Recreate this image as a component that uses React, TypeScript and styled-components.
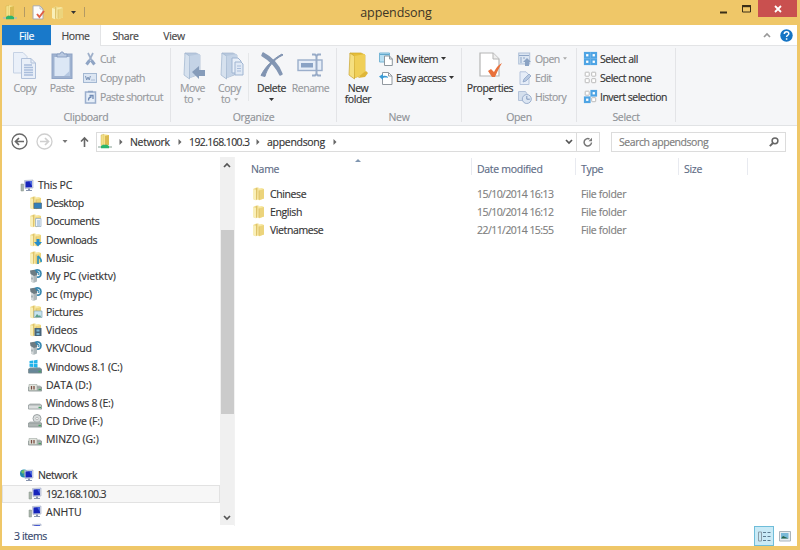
import React from "react";
import styled, { createGlobalStyle, css } from "styled-components";

const Global = createGlobalStyle`
  * { box-sizing: border-box; }
  html, body { margin: 0; padding: 0; overflow: hidden; }
  body {
    font-family: "Open Sans", "Noto Sans", sans-serif; font-size: 10.5px; color: #333;
    letter-spacing: -0.2px; -webkit-text-stroke: 0.15px currentColor;
  }
  svg { display: block; flex: none; overflow: visible; }
`;

/* ---------- window frame ---------- */
const Window = styled.div`
  width: 800px; height: 550px; background: #efc768;
  display: grid; grid-template-rows: 25px 21px 80px 31px 369px 20px;
  padding: 0 3px 4px 2px;
`;
const TitleBar = styled.header`
  display: grid; grid-template-columns: 250px 1fr 250px; align-items: center;
`;
const QuickAccess = styled.div`
  display: flex; align-items: center; gap: 6px; padding-left: 1px; height: 25px;
`;
const QuickDivider = styled.i`width: 1px; height: 10px; background: #b39a64; margin: 0 1px 2px;`;
const Title = styled.h1`
  margin: 0; font-size: 12.5px; font-weight: 400; text-align: center; color: #3d3526; letter-spacing: -0.1px;
  padding-right: 7px; -webkit-text-stroke: 0;
`;
const WindowButtons = styled.div`
  display: flex; justify-content: flex-end; align-self: start; height: 17px;
`;
const WinButton = styled.button<{ $close?: boolean }>`
  border: 0; padding: 0; height: 17px; width: ${(p) => (p.$close ? 39 : 23)}px;
  display: flex; align-items: center; justify-content: center;
  background: ${(p) => (p.$close ? "#c9504f" : "transparent")};
`;

/* ---------- ribbon ---------- */
const Tabs = styled.nav`
  display: flex; background: #fff; border-bottom: 1px solid #e3e4e6; height: 21px;
`;
const Tab = styled.div<{ $kind?: "file" | "active"; $w: number }>`
  width: ${(p) => p.$w}px; height: 21px; line-height: 22px; text-align: center; color: #444; letter-spacing: -0.4px;
  ${(p) => p.$kind === "file" && css`background: #1979ca; color: #fff; height: 20px;`}
  ${(p) => p.$kind === "active" && css`background: #f5f6f8; border-right: 1px solid #e3e4e6;`}
`;
const TabTools = styled.div`
  margin-left: auto; display: flex; align-items: center; gap: 9px; padding-right: 4px; height: 20px;
`;
const Ribbon = styled.section`
  display: flex; background: #f5f6f8; border-bottom: 1px solid #e1e3e5; padding-top: 2px; height: 80px;
`;
const Group = styled.div<{ $w: number }>`
  width: ${(p) => p.$w}px; height: 74px; border-right: 1px solid #e3e4e7;
  display: grid; grid-template-rows: 62px 12px;
`;
const GroupBody = styled.div<{ $pad: number }>`display: flex; padding-left: ${(p) => p.$pad}px;`;
const GroupName = styled.div`
  text-align: center; color: #8f9297; line-height: 14px; letter-spacing: -0.3px;
`;
const LargeButton = styled.div<{ $w: number; $on?: boolean }>`
  width: ${(p) => p.$w}px; display: flex; flex-direction: column; align-items: center;
  color: ${(p) => (p.$on ? "#333" : "#97999d")}; line-height: 11px; text-align: center; padding-top: 3px;
  white-space: nowrap; letter-spacing: -0.45px;
`;
const LargeIcon = styled.span`height: 32px; display: flex; align-items: flex-start;`;
const LabelLine = styled.span`display: flex; align-items: center; gap: 4px; height: 11px;`;
const InnerDivider = styled.i`width: 1px; height: 48px; margin: 5px 3px 0 0; background: #e5e7e9;`;
const SmallColumn = styled.div<{ $gap?: number }>`
  display: flex; flex-direction: column; padding-top: 1px; margin-left: ${(p) => p.$gap ?? 0}px;
`;
const SmallButton = styled.div<{ $on?: boolean }>`
  height: 19px; display: flex; align-items: center; gap: 3px; white-space: nowrap;
  color: ${(p) => (p.$on ? "#333" : "#97999d")};
  letter-spacing: ${(p) => (p.$on ? -0.6 : -0.55)}px;
`;
const SelectButton = styled(SmallButton)`letter-spacing: -0.5px;`;

/* ---------- address row ---------- */
const AddressRow = styled.div`
  display: flex; align-items: center; background: #fff; padding: 0 11px 0 9px; height: 31px;
`;
const NavButtons = styled.div`display: flex; align-items: center; width: 85px;`;
const AddressBox = styled.div`
  width: 504px; height: 20px; border: 1px solid #dcdcdc; display: flex; align-items: center; padding-left: 1px;
`;
const Crumb = styled.span<{ $w: number; $ls?: number }>`
  width: ${(p) => p.$w}px; color: #333; white-space: nowrap; letter-spacing: ${(p) => p.$ls ?? -0.3}px;
`;
const CrumbArrow = styled.span`width: 18px; display: flex; justify-content: center;`;
const AddressEnd = styled.div`
  margin-left: auto; display: grid; grid-template-columns: 14px 23px; align-items: center; justify-items: center; height: 18px;
`;
const Refresh = styled.span`
  border-left: 1px solid #dcdcdc; width: 23px; height: 18px; display: flex; align-items: center; justify-content: center;
`;
const SearchBox = styled.div`
  margin-left: 11px; width: 175px; height: 20px; border: 1px solid #dcdcdc; padding: 0 6px 0 7px; color: #7c7c7c;
  display: flex; align-items: center; justify-content: space-between; letter-spacing: -0.45px;
`;

/* ---------- body ---------- */
const Body = styled.main`
  display: grid; grid-template-columns: 218px 14px 1fr; background: #fff; min-height: 0;
`;
const Tree = styled.aside`overflow: hidden; padding-top: 19px; height: 369px;`;
const TreeRow = styled.div<{ $depth: number; $selected?: boolean }>`
  height: 18.17px; display: flex; align-items: center; gap: 4px; color: #333;
  padding-left: ${(p) => (p.$depth ? 26 : 18)}px;
  white-space: nowrap;
  ${(p) => p.$selected && css`background: #f7f7f7; box-shadow: inset 0 0 0 1px #e2e2e2;`}
`;
const TreeText = styled.span<{ $ls: number }>`letter-spacing: ${(p) => p.$ls}px;`;
const TreeGap = styled.div`height: 18px;`;
const ScrollTrack = styled.div`
  background: #f0f0f0; display: flex; flex-direction: column; align-items: center; height: 368px;
`;
const ScrollThumb = styled.div`width: 13px; height: 184px; background: #cbcbcb; margin-top: 57px;`;
const ScrollEnd = styled.span<{ $bottom?: boolean }>`
  height: 16px; display: flex; align-items: center; ${(p) => p.$bottom && "margin-top: auto;"}
`;
const Files = styled.section`border-left: 1px solid #f2f2f2;`;
const columns = "237px 104px 103px 69px";
const HeaderRow = styled.div`
  display: grid; grid-template-columns: ${columns}; height: 28px; align-items: start;
`;
const HeaderCell = styled.div<{ $first?: boolean }>`
  height: 17px; margin-top: 1px; border-right: 1px solid #e8eaf0; color: #5d6b85; line-height: 22px;
  padding-left: ${(p) => (p.$first ? 16 : 5)}px; white-space: nowrap; letter-spacing: -0.3px;
  display: flex;
`;
const SortMark = styled.span`margin: 1px 0 0 76px;`;
const FileRow = styled.div`
  display: grid; grid-template-columns: ${columns}; height: 18.1px; align-items: center; color: #808080;
  white-space: nowrap;
`;
const FileName = styled.div`
  display: flex; align-items: center; gap: 5px; padding-left: 17px; color: #333; letter-spacing: -0.4px;
`;
const FileCell = styled.div<{ $ls?: number }>`padding-left: 5px; letter-spacing: ${(p) => p.$ls ?? -0.3}px;`;
const StatusBar = styled.footer`
  display: flex; align-items: center; background: #fff; color: #34466b; padding: 0 6px 0 12px; letter-spacing: -0.4px;
`;
const ViewModes = styled.div`margin-left: auto; display: flex; align-items: center; gap: 5px;`;
const ActiveView = styled.span`
  width: 20px; height: 20px; background: #c9eaf6; border: 1px solid #6fbdd9; display: flex; align-items: center; justify-content: center;
`;

/* ---------- icons ---------- */
const Svg = ({ w, h, vb, children }: { w: number; h: number; vb?: string; children: React.ReactNode }) => (
  <svg width={w} height={h} viewBox={vb ?? `0 0 ${w} ${h}`} fill="none">{children}</svg>
);
const Caret = ({ c = "#333", s = 5 }: { c?: string; s?: number }) => (
  <Svg w={s} h={3} vb="0 0 5 3"><path d="M0 0h5L2.5 3z" fill={c} /></Svg>
);
const Folder = ({ children }: { children?: React.ReactNode }) => (
  <Svg w={13} h={14}>
    <path d="M1 2 4.500.5h2V12L4 13.200 1 12z" fill="#eed987" />
    <path d="M1 2 4 3v10.200L1 12z" fill="#f9efb8" />
    <path d="M6 1.500 10 1l2 1v9.500L7 13.300 5 12z" fill="#f7e7a0" />
    <path d="M7 3.500 12 2v9.500l-5 1.800z" fill="#ecd47c" />
    <path d="M4.500 1v11.500M7 3.500v9" stroke="#d3b45a" strokeWidth=".6" />
    {children}
  </Svg>
);
const NetFolder = () => (
  <Svg w={14} h={15}>
    <path d="M3 1 6 .3V10.500L3 11.500z" fill="#f3e08a" stroke="#c9ab45" strokeWidth=".4" /><path d="M6 .3 11 1v10H6z" fill="#f6e28b" />
    <path d="m7 2 4-1v10l-4 1z" fill="#dbbb52" />
    <path d="M0 13h14" stroke="#aebfb7" strokeWidth="1.500" /><path d="M3 14.200V12l2-1.200h4l2 1.200v2.200z" fill="#2bb56c" />
  </Svg>
);
const Doc = () => (
  <Svg w={13} h={15}>
    <path d="M1 .8h7L11 4v10H1z" fill="#fdfdfd" stroke="#aaa" /><path d="M8 1v3h3" stroke="#aaa" strokeWidth=".7" />
    <path d="m5 9 2.400 3L12 6" stroke="#df6046" strokeWidth="2" />
  </Svg>
);
const CopyBig = () => (
  <Svg w={26} h={29}>
    <path d="M1.500 1.500H11l4 4V22H1.500z" fill="#eaf0f9" stroke="#c6d2e4" />
    <path d="M9.500 7.500H19l4.500 4.500V27.500h-14z" fill="#e9eff8" stroke="#b1c1da" /><path d="M19 7.500V12h4.500" stroke="#b1c1da" />
    <path d="M12 14h8M12 16.500h9M12 19h9M12 21.500h9M12 24h9" stroke="#a9bddb" strokeWidth="1.300" />
  </Svg>
);
const PasteBig = () => (
  <Svg w={24} h={29}>
    <rect x="2" y="3" width="20" height="24.500" fill="#9fb2d0" stroke="#8fa4c6" /><rect x="4.500" y="6" width="15" height="19" fill="#dce7f5" />
    <path d="M7 6V3h3l1-2h2l1 2h3v3z" fill="#b9c9e1" stroke="#8197bb" strokeWidth=".8" />
    <path d="m14 25 5.500-5v5z" fill="#b5c8e2" />
  </Svg>
);
const FolderBig = ({ kind }: { kind: "move" | "copy" | "new" }) => {
  const y = kind === "new";
  return (
    <Svg w={26} h={29}>
      <path d="M5 2h11l4 2v19L9 27z" fill={y ? "#e5be38" : "#b7c8dd"} stroke={y ? "#d0a92d" : "#a4b6ce"} strokeWidth=".7" />
      <path d="M5 2 9.500 5v23L4 24z" fill={y ? "#f5df80" : "#d6e1ee"} stroke={y ? "#c9a431" : "#9eb3cd"} strokeWidth=".7" />
      <path d="M9.500 5 20 3v19l-10 5z" fill={y ? "#f0cf57" : "#c4d3e6"} />
      {y && <path d="m18 22 3-2 2 2-3 4-7 1z" fill="#dfb638" />}
      {kind === "move" && <path d="m12 21 7-6v4h6v6h-6v3z" fill="#869cba" />}
      {kind === "copy" && <><path d="M15 7h6l3 3v12h-9z" fill="#e8eff8" stroke="#9fb4d1" /><path d="M18 11h6l2 2v11h-8z" fill="#e0e9f5" stroke="#9fb4d1" /><path d="M20 15h4M20 17.500h4M20 20h4" stroke="#a9bddb" /></>}
    </Svg>
  );
};
const DeleteBig = () => (
  <Svg w={26} h={29}>
    <path d="M3 4.500C9 8 17 15 21 24l2-1C20 14 12 6 4 2z" fill="#8497b4" stroke="#8497b4" strokeWidth="1.500" strokeLinejoin="round" />
    <path d="M23 3C14 8 6 16 2 24.500l4 1C8 17 15 8 24 4z" fill="#8093b1" stroke="#8093b1" strokeLinejoin="round" />
  </Svg>
);
const RenameBig = () => (
  <Svg w={27} h={29}>
    <rect x="1" y="9" width="24" height="10.500" fill="#e6eef8" stroke="#9baecb" strokeWidth="1.400" />
    <rect x="4" y="12" width="12" height="4.500" fill="#8aa3c5" />
    <path d="M15 3.500h3l1.500 1.500L21 3.500h3M19.500 5v18M15 24.500h3l1.500-1.500 1.500 1.500h3" stroke="#98abc7" strokeWidth="2" />
  </Svg>
);
const PropertiesBig = () => (
  <Svg w={26} h={29}>
    <path d="M3 2h13l6 6v17H3z" fill="#fff" stroke="#b5b5b5" strokeWidth="1.200" /><path d="M16 2v6h6" fill="#eee" stroke="#b5b5b5" />
    <path d="m11 20 3-2 3 3c2-4 4-7 8-9-3 5-5 9-7 14h-3z" fill="#e8703b" />
  </Svg>
);
const Scissors = () => (
  <Svg w={13} h={14}><path d="M4 1 8 9M9 1 5 9" stroke="#9fb0ca" strokeWidth="1.700" /><path d="M2.500 12.500 5.500 8.500M10.500 12.500 7.500 8.500" stroke="#8fa4c4" strokeWidth="3" /></Svg>
);
const PathIcon = () => (
  <Svg w={14} h={12}><rect x=".5" y="1.500" width="13" height="9" fill="#dce6f3" stroke="#a4b8d2" /><path d="m2.500 4 1.200 4L5 5l1.200 3 1.200-4M8.500 8h1M10.500 8h1" stroke="#7d95b8" /></Svg>
);
const ShortcutIcon = () => (
  <Svg w={13} h={14}><rect x="1.500" y="2" width="10" height="11" fill="#e6eef8" stroke="#9bafcd" strokeWidth="1.500" /><path d="M4.500 10.500c0-2 1-3.500 3-3.500M5.500 5.500H9V9" stroke="#6f8ab4" strokeWidth="1.300" /><path d="M4 1.500h5" stroke="#8fa4c4" strokeWidth="1.500" /></Svg>
);
const NewItem = () => (
  <Svg w={14} h={14}><path d="M.5 1h10v9H.5z" fill="#b9dff2" stroke="#76b5d5" /><path d="M1 2.500h9" stroke="#62a8cc" /><path d="M5.500 4h5L13.300 7v6.500H5.500z" fill="#fff" stroke="#8d969d" /><path d="M10.500 4v3h3" stroke="#8d969d" /></Svg>
);
const EasyAccess = () => (
  <Svg w={14} h={14}><path d="M3.500 1.500h6L13 5v8.500H3.500z" fill="#fff" stroke="#9299a0" /><path d="M9.500 1.500V5H13" stroke="#9299a0" /><path d="M0 5.500 4 3v2c3-.5 5 0 5 2-2-.6-3-.5-5 0V9z" fill="#3b9bd5" /></Svg>
);
const OpenIcon = () => (
  <Svg w={14} h={14}><rect x=".7" y="1" width="11" height="11" fill="#dce6f2" stroke="#afc0d8" /><path d="M1 3.500h10M3 5v6M5 6h2" stroke="#8fa6c7" /><path d="m9 6 4 4h-2v4H7v-4H5z" fill="#8aa2c3" /></Svg>
);
const EditIcon = () => (
  <Svg w={14} h={14}><path d="M2 .8h6L11 4v9.500H2z" fill="#e6edf8" stroke="#b5c4dc" /><path d="m5 11 1-3 5-5 2 2-5 5z" fill="#b8c9e2" stroke="#8fa5c7" strokeWidth=".8" /></Svg>
);
const HistoryIcon = () => (
  <Svg w={14} h={14}><path d="M.5 1.500h7l2 3v6h-9z" fill="#d4dfed" stroke="#b3c2d9" /><circle cx="8.800" cy="9" r="4.500" fill="#dce6f3" stroke="#9bafcd" /><path d="M8.800 6v3.200h3" stroke="#8097bb" /></Svg>
);
const SelectIcon = ({ on }: { on: number[] }) => (
  <Svg w={13} h={13}>
    {[0, 1, 2, 3].map((i) => {
      const x = (i % 2) * 6.5, y = Math.floor(i / 2) * 6.5;
      return on.includes(i)
        ? <rect key={i} x={x + 1} y={y + 1} width="4.500" height="4.500" fill="#fff" stroke="#4ea4e4" strokeWidth="2.200" />
        : <rect key={i} x={x + 1.2} y={y + 1.2} width="4" height="4" rx=".5" fill="#fff" stroke="#bababa" />;
    })}
  </Svg>
);
const Pc = ({ globe }: { globe?: boolean }) => (
  <Svg w={14} h={13}>
    {globe ? <><circle cx="4" cy="4.500" r="4" fill="#218bb0" /><path d="M1 3c2-3 4-2 5-1L3 5zM3 6l3-1v3z" fill="#70bd63" /></> : <path d="M1 5h2.500v7H1z" fill="#a9b5ab" stroke="#859188" strokeWidth=".5" />}
    <path d="M4.500 1.500 13 1v8L5 9.500z" fill="#d7dcec" stroke="#a0aac2" strokeWidth=".6" /><path d="M5.500 2.500 12 2v6.200l-6.500.4z" fill="#1724ba" /><path d="m9 2.300 3-.3v5z" fill="#4b67df" />
    <path d="M8 9.500h2v1.500h2v1H6v-1h2z" fill="#8995af" />
  </Svg>
);
const Media = () => (
  <Svg w={13} h={14}>
    <path d="M2 2 5 1l3 1v10.500l-3 1.300-3-1z" fill="#aeb7ba" /><path d="M2 3 4.500 4v9.700l-2.500-1z" fill="#d5dadb" />
    <path d="M1 1.500 5.500.8 8 2v4L5 7 1.500 5z" fill="#6d7c83" /><path d="M3 8.500v2" stroke="#78888e" />
    <path d="M6 1.500c3-1.500 6 0 6 3S10 8.500 8 8M7 3c2-.5 3 1 2.500 3" stroke="#3384ad" strokeWidth="1.600" /><path d="M9.500 3.500h1.500v2H9.500z" fill="#8cc8e2" />
  </Svg>
);
const Drive = ({ kind }: { kind: "win" | "data" | "plain" | "cd" }) => (
  <Svg w={14} h={14}>
    {kind === "win" && <path d="M1.500 1 5 .5v3H1.500zM5.600.400 9.500-.2V3.500H5.600zM1.500 4.100H5v3l-3.500-.4zM5.600 4.100H9.500v3.600l-3.900-.4z" fill="#20b3ea" />}
    {kind === "cd" && <><circle cx="9" cy="4.500" r="4" fill="#d9dddd" stroke="#9da3a4" /><circle cx="9" cy="4.500" r="1.200" fill="#fff" stroke="#999" strokeWidth=".6" /></>}
    <path d="M2 7.500h10l2 2v3.800H.5V9z" fill={kind === "win" ? "#71909f" : "#b7bdbc"} /><path d="M.5 9h13v4H.5z" fill={kind === "win" ? "#678798" : kind === "plain" ? "#dadddd" : "#adb4b2"} stroke="#858d8e" strokeWidth=".6" />
    {kind === "data" && <><path d="M1 6.500h8v6H1z" fill="#e1e4dd" stroke="#a0a7a3" strokeWidth=".6" /><path d="M3.500 8v3.500M6 8v3.500" stroke="#7b4d42" strokeWidth="1.300" /></>}
    <path d="M10.500 11.500H13" stroke="#48a064" strokeWidth="1.400" />
  </Svg>
);
const overlay: Record<string, React.ReactNode> = {
  Desktop: <path d="M5 7h7.500v5.500H5z" fill="#327fba" stroke="#4f6c80" strokeWidth=".7" />,
  Documents: <><path d="M6.500 4.500h5.500v8H6.500z" fill="#eef4fa" stroke="#92aac0" strokeWidth=".7" /><path d="M8 7h3M8 9h3M8 11h3" stroke="#6c9bc4" strokeWidth=".8" /></>,
  Downloads: <path d="M7.500 6h3v3h2.500L9 13.500 5 9h2.500z" fill="#258dcc" />,
  Music: <path d="M9 13V5c1 2 4 2 3 6" stroke="#2f93bd" strokeWidth="1.700" />,
  Pictures: <><path d="M5 6h8v6.500H5z" fill="#c8e3ee" stroke="#86a7b5" strokeWidth=".7" /><path d="m6 12 2-3 2 2 1-1 1 2z" fill="#5b9e89" /></>,
  Videos: <><path d="M5.500 5h7v8h-7z" fill="#48647a" /><path d="M7.500 6.500h3v2h-3zM7.500 10h3v2h-3z" fill="#79b7d4" /></>,
};
const Chevron = ({ c = "#777", down }: { c?: string; down?: boolean }) => (
  <Svg w={8} h={5}><path d={down ? "m1 1 3 3 3-3" : "m1 4 3-3 3 3"} stroke={c} strokeWidth="1.700" /></Svg>
);
const Circled = ({ c, flip }: { c: string; flip?: boolean }) => (
  <Svg w={17} h={17}><circle cx="8.500" cy="8.500" r="7.500" stroke={c} strokeWidth="1.300" /><path d={flip ? "M4 8.500h8M9 5l3.500 3.500L9 12" : "M13 8.500H5M8 5 4.500 8.500 8 12"} stroke={c} strokeWidth="1.700" /></Svg>
);
const Right = () => <Svg w={4} h={6}><path d="m.5 0 3 3-3 3z" fill="#666" /></Svg>;

const tree: [string, React.ReactNode, number][] = [
  ["Desktop", <Folder>{overlay.Desktop}</Folder>, -0.4],
  ["Documents", <Folder>{overlay.Documents}</Folder>, -0.3],
  ["Downloads", <Folder>{overlay.Downloads}</Folder>, -0.4],
  ["Music", <Folder>{overlay.Music}</Folder>, -0.2],
  ["My PC (vietktv)", <Media />, -0.1],
  ["pc (mypc)", <Media />, -0.1],
  ["Pictures", <Folder>{overlay.Pictures}</Folder>, -0.3],
  ["Videos", <Folder>{overlay.Videos}</Folder>, -0.2],
  ["VKVCloud", <Media />, -0.2],
  ["Windows 8.1 (C:)", <Drive kind="win" />, -0.25],
  ["DATA (D:)", <Drive kind="data" />, -0.05],
  ["Windows 8 (E:)", <Drive kind="plain" />, -0.25],
  ["CD Drive (F:)", <Drive kind="cd" />, -0.25],
  ["MINZO (G:)", <Drive kind="data" />, -0.1],
];
const files = [
  ["Chinese", "15/10/2014 16:13"],
  ["English", "15/10/2014 16:12"],
  ["Vietnamese", "22/11/2014 15:55"],
];

const IconSlot = styled.span<{ $w?: number }>`width: ${(p) => p.$w ?? 14}px; display: flex; justify-content: center; flex: none;`;

export default function App() {
  return (
    <Window>
      <Global />
      <TitleBar>
        <QuickAccess>
          <NetFolder /><QuickDivider /><Doc /><Folder /><Caret s={7} /><QuickDivider />
        </QuickAccess>
        <Title>appendsong</Title>
        <WindowButtons>
          <WinButton aria-label="Minimize"><Svg w={8} h={11}><path d="M0 9.500h7" stroke="#3a2f18" strokeWidth="2" /></Svg></WinButton>
          <WinButton aria-label="Maximize"><Svg w={10} h={8}><path d="M.5.500h8v6.500h-8z" stroke="#3a2f18" /><path d="M0 1.200h9" stroke="#3a2f18" strokeWidth="2" /></Svg></WinButton>
          <WinButton aria-label="Close" $close><Svg w={8} h={8}><path d="m1 1 6 6M7 1 1 7" stroke="#fff" strokeWidth="1.800" /></Svg></WinButton>
        </WindowButtons>
      </TitleBar>
      <Tabs>
        <Tab $kind="file" $w={49}>File</Tab>
        <Tab $kind="active" $w={50}>Home</Tab>
        <Tab $w={49}>Share</Tab>
        <Tab $w={48}>View</Tab>
        <TabTools>
          <Chevron c="#999" />
          <Svg w={13} h={13}><circle cx="6.500" cy="6.500" r="6.200" fill="#1574c4" /><path d="M4.300 5c0-3 4.500-3 4.500-.3 0 1.600-2.200 1.500-2.200 3.300M6.600 9.200v1.500" stroke="#fff" strokeWidth="1.500" /></Svg>
        </TabTools>
      </Tabs>
      <Ribbon>
        <Group $w={169}>
          <GroupBody $pad={4}>
            <LargeButton $w={38}><LargeIcon><CopyBig /></LargeIcon><LabelLine>Copy</LabelLine></LargeButton>
            <LargeButton $w={36}><LargeIcon><PasteBig /></LargeIcon><LabelLine>Paste</LabelLine></LargeButton>
            <SmallColumn $gap={3}>
              <SmallButton><IconSlot><Scissors /></IconSlot>Cut</SmallButton>
              <SmallButton><PathIcon />Copy path</SmallButton>
              <SmallButton><IconSlot><ShortcutIcon /></IconSlot>Paste shortcut</SmallButton>
            </SmallColumn>
          </GroupBody>
          <GroupName>Clipboard</GroupName>
        </Group>
        <Group $w={166}>
          <GroupBody $pad={3}>
            <LargeButton $w={37}><LargeIcon><FolderBig kind="move" /></LargeIcon><LabelLine>Move</LabelLine><LabelLine>to <Caret c="#aaa" s={4} /></LabelLine></LargeButton>
            <LargeButton $w={37}><LargeIcon><FolderBig kind="copy" /></LargeIcon><LabelLine>Copy</LabelLine><LabelLine>to <Caret c="#aaa" s={4} /></LabelLine></LargeButton>
            <InnerDivider />
            <LargeButton $w={39} $on><LargeIcon><DeleteBig /></LargeIcon><LabelLine>Delete</LabelLine><LabelLine><Caret /></LabelLine></LargeButton>
            <LargeButton $w={39}><LargeIcon><RenameBig /></LargeIcon><LabelLine>Rename</LabelLine></LargeButton>
          </GroupBody>
          <GroupName>Organize</GroupName>
        </Group>
        <Group $w={125}>
          <GroupBody $pad={3}>
            <LargeButton $w={36} $on><LargeIcon><FolderBig kind="new" /></LargeIcon><LabelLine>New</LabelLine><LabelLine>folder</LabelLine></LargeButton>
            <SmallColumn $gap={3}>
              <SmallButton $on><NewItem />New item <Caret /></SmallButton>
              <SmallButton $on><EasyAccess />Easy access <Caret /></SmallButton>
            </SmallColumn>
          </GroupBody>
          <GroupName>New</GroupName>
        </Group>
        <Group $w={115}>
          <GroupBody $pad={4}>
            <LargeButton $w={48} $on><LargeIcon><PropertiesBig /></LargeIcon><LabelLine>Properties</LabelLine><LabelLine><Caret /></LabelLine></LargeButton>
            <SmallColumn $gap={4}>
              <SmallButton><OpenIcon />Open <Caret c="#aaa" s={4} /></SmallButton>
              <SmallButton><EditIcon />Edit</SmallButton>
              <SmallButton><HistoryIcon />History</SmallButton>
            </SmallColumn>
          </GroupBody>
          <GroupName>Open</GroupName>
        </Group>
        <Group $w={99}>
          <GroupBody $pad={7}>
            <SmallColumn>
              <SelectButton $on><SelectIcon on={[0, 1, 2, 3]} />Select all</SelectButton>
              <SelectButton $on><SelectIcon on={[]} />Select none</SelectButton>
              <SelectButton $on><SelectIcon on={[1, 2]} />Invert selection</SelectButton>
            </SmallColumn>
          </GroupBody>
          <GroupName>Select</GroupName>
        </Group>
      </Ribbon>
      <AddressRow>
        <NavButtons>
          <Circled c="#686868" />
          <IconSlot $w={33}><Circled c="#cfcfcf" flip /></IconSlot>
          <IconSlot $w={8}><Caret c="#777" s={6} /></IconSlot>
          <IconSlot $w={31}><Svg w={9} h={11}><path d="M4.500 11V2M1 5.500 4.500 2 8 5.500" stroke="#666" strokeWidth="1.600" /></Svg></IconSlot>
        </NavButtons>
        <AddressBox>
          <NetFolder />
          <CrumbArrow><Right /></CrumbArrow><Crumb $w={41}>Network</Crumb>
          <CrumbArrow><Right /></CrumbArrow><Crumb $w={60} $ls={-0.6}>192.168.100.3</Crumb>
          <CrumbArrow><Right /></CrumbArrow><Crumb $w={59}>appendsong</Crumb>
          <CrumbArrow><Right /></CrumbArrow>
          <AddressEnd>
            <Chevron down c="#555" />
            <Refresh><Svg w={10} h={10}><path d="M8.500 5.500a3.700 3.700 0 1 1-2-3.500" stroke="#777" strokeWidth="1.500" /><path d="M5.500 4.200H9V.700z" fill="#777" /></Svg></Refresh>
          </AddressEnd>
        </AddressBox>
        <SearchBox>Search appendsong<Svg w={10} h={10}><circle cx="6" cy="3.800" r="2.900" stroke="#666" strokeWidth="1.500" /><path d="M4 6 .800 9.200" stroke="#666" strokeWidth="1.900" /></Svg></SearchBox>
      </AddressRow>
      <Body>
        <Tree>
          <TreeRow $depth={0}><Pc /><TreeText $ls={-0.2}>This PC</TreeText></TreeRow>
          {tree.map(([name, icon, ls]) => (
            <TreeRow key={name} $depth={1}><IconSlot>{icon}</IconSlot><TreeText $ls={ls}>{name}</TreeText></TreeRow>
          ))}
          <TreeGap />
          <TreeRow $depth={0}><Pc globe /><TreeText $ls={-0.4}>Network</TreeText></TreeRow>
          <TreeRow $depth={1} $selected><Pc /><TreeText $ls={-0.65}>192.168.100.3</TreeText></TreeRow>
          <TreeRow $depth={1}><Pc /><TreeText $ls={0}>ANHTU</TreeText></TreeRow>
          <TreeRow $depth={1}><Pc /></TreeRow>
        </Tree>
        <ScrollTrack>
          <ScrollEnd><Chevron c="#555" /></ScrollEnd>
          <ScrollThumb />
          <ScrollEnd $bottom><Chevron c="#555" down /></ScrollEnd>
        </ScrollTrack>
        <Files>
          <HeaderRow>
            <HeaderCell $first>Name<SortMark><Svg w={6} h={3}><path d="M0 3h6L3 0z" fill="#8096b0" /></Svg></SortMark></HeaderCell>
            <HeaderCell>Date modified</HeaderCell><HeaderCell>Type</HeaderCell><HeaderCell>Size</HeaderCell>
          </HeaderRow>
          {files.map(([name, date]) => (
            <FileRow key={name}><FileName><Folder />{name}</FileName><FileCell $ls={-0.55}>{date}</FileCell><FileCell>File folder</FileCell></FileRow>
          ))}
        </Files>
      </Body>
      <StatusBar>
        3 items
        <ViewModes>
          <ActiveView><Svg w={13} h={11}><path d="M.5 1h3v9h-3z" stroke="#8b9da8" /><path d="M5 1.500h3M9.500 1.500h3M5 5.500h3M9.500 5.500h3M5 9.500h3M9.500 9.500h3" stroke="#5c7c91" strokeWidth="1.200" /></Svg></ActiveView>
          <Svg w={12} h={11}><path d="M.5.500h11v9.500H.5z" fill="#e6edf1" stroke="#aab4bb" /><path d="M2 2h7.500v5.500H2z" fill="#79b9d8" /><path d="m2 7.500 2-2.500 5.500 2.500z" fill="#26644a" /></Svg>
        </ViewModes>
      </StatusBar>
    </Window>
  );
}
